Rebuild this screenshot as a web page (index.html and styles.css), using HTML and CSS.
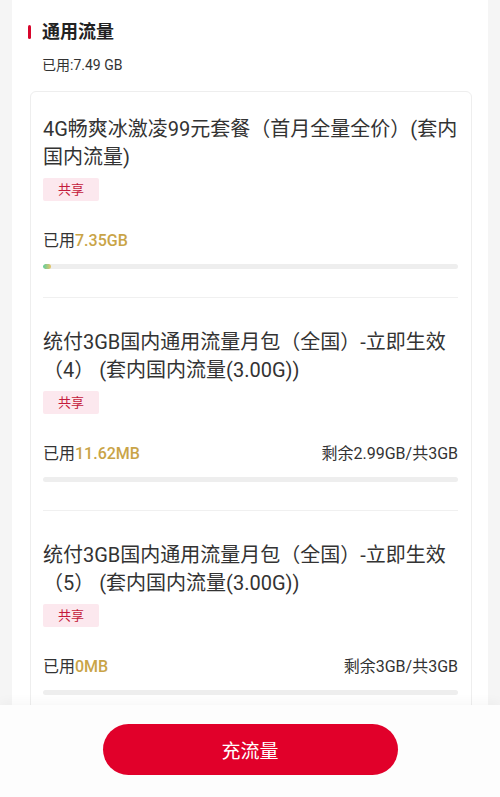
FILE: index.html
```html
<!DOCTYPE html>
<html lang="zh-CN">
<head>
    <meta charset="UTF-8">
    <meta name="viewport" content="width=device-width, initial-scale=1.0">
    <title>通用流量</title>
    <link rel="stylesheet" href="styles.css">
</head>
<body>
    <div class="panel">
        <div class="section-head">
            <h2 class="section-title">通用流量</h2>
            <div class="section-used">已用:7.49 GB</div>
        </div>

        <div class="card">
            <div class="item">
                <div class="item-name">4G畅爽冰激凌99元套餐（首月全量全价）(套内国内流量)</div>
                <span class="tag">共享</span>
                <div class="usage">
                    <span>已用<em>7.35GB</em></span>
                </div>
                <div class="bar"><div class="bar-fill" style="width: 2%"></div></div>
            </div>

            <div class="item">
                <div class="item-name">统付3GB国内通用流量月包（全国）-立即生效（4） (套内国内流量(3.00G))</div>
                <span class="tag">共享</span>
                <div class="usage">
                    <span>已用<em>11.62MB</em></span>
                    <span>剩余2.99GB/共3GB</span>
                </div>
                <div class="bar"><div class="bar-fill" style="width: 0%"></div></div>
            </div>

            <div class="item">
                <div class="item-name">统付3GB国内通用流量月包（全国）-立即生效（5） (套内国内流量(3.00G))</div>
                <span class="tag">共享</span>
                <div class="usage">
                    <span>已用<em>0MB</em></span>
                    <span>剩余3GB/共3GB</span>
                </div>
                <div class="bar"><div class="bar-fill" style="width: 0%"></div></div>
            </div>
        </div>
    </div>

    <div class="footer">
        <button class="charge-btn">充流量</button>
    </div>
</body>
</html>
```

FILE: styles.css
```css
/* 通用流量 页面 */
body {
    margin: 0;
    background-color: #f5f5f5;
    font-family: Roboto, "Noto Sans CJK SC", sans-serif;
    color: #333;
}

.panel {
    margin: 0 12px;
    background-color: #fff;
    padding: 20px 16px 0 18px;
    min-height: 100vh;
    box-sizing: border-box;
}

.section-head {
    margin-left: -2px;
}

.section-title {
    margin: 0;
    padding-left: 14px;
    position: relative;
    font-size: 18px;
    line-height: 24px;
    font-weight: 700;
    color: #222;
}

.section-title::before {
    content: "";
    position: absolute;
    left: 0;
    top: 5px;
    width: 3px;
    height: 14px;
    border-radius: 2px;
    background-color: #d7062c;
}

.section-used {
    margin-top: 11px;
    padding-left: 14px;
    font-size: 14px;
    line-height: 20px;
    color: #333;
}

.card {
    margin-top: 16px;
    border: 1px solid #eeeeee;
    border-radius: 6px;
    padding: 0 13px 0 12px;
}

.item {
    padding: 30px 0 28px;
    border-bottom: 1px solid #f0f0f0;
}

.item:first-child {
    padding-top: 23px;
}

.item-name {
    font-size: 20px;
    line-height: 28px;
    color: #333;
}

.tag {
    display: inline-block;
    margin-top: 7px;
    width: 56px;
    height: 23px;
    line-height: 23px;
    text-align: center;
    font-size: 13px;
    color: #c41a3c;
    background-color: #fce8ee;
    border-radius: 2px;
}

.usage {
    display: flex;
    justify-content: space-between;
    margin-top: 29px;
    font-size: 16px;
    line-height: 22px;
    color: #333;
}

.usage em {
    font-style: normal;
    font-weight: 500;
    color: #c9a447;
}

.bar {
    margin-top: 12px;
    height: 5px;
    border-radius: 3px;
    background-color: #eeeeee;
    overflow: hidden;
}

.bar-fill {
    height: 100%;
    border-radius: 3px;
    background: linear-gradient(90deg, #5ccf9c, #e8c46a);
}

.footer {
    position: fixed;
    left: 0;
    right: 0;
    bottom: 0;
    height: 92px;
    background-color: #fdfdfd;
    box-shadow: 0 -4px 10px rgba(0, 0, 0, 0.03);
    display: flex;
    justify-content: center;
    padding-top: 19px;
    box-sizing: border-box;
}

.charge-btn {
    width: 295px;
    height: 51px;
    border: none;
    border-radius: 26px;
    background-color: #e1002a;
    color: #fff;
    font-family: Roboto, "Noto Sans CJK SC", sans-serif;
    font-size: 19px;
    cursor: pointer;
}
```
